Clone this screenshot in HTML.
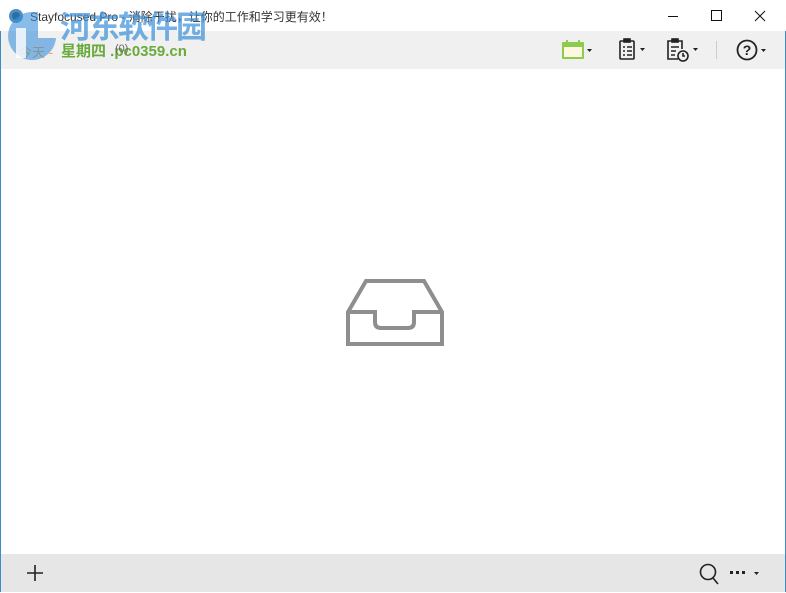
<!DOCTYPE html>
<html><head><meta charset="utf-8"><style>
body{margin:0;width:786px;height:593px;overflow:hidden;background:#fff;font-family:"Liberation Sans","Noto Sans CJK SC",sans-serif;position:relative}
.win{position:absolute;left:0;top:0;width:784px;height:591px;border:1px solid #3c8cc8;border-top:none;}
.title{position:absolute;left:0;top:0;width:786px;height:31px;background:#fff;font-size:12px;color:#000}
.tb{position:absolute;left:1px;top:31px;width:784px;height:38px;background:#f0f0f0}
.bb{position:absolute;left:1px;top:554px;width:784px;height:38px;background:#e6e6e6}
.t{position:absolute;white-space:nowrap}
</style></head><body>
<div class="win"></div>
<div class="title">
<svg class="t" style="left:8px;top:8px" width="16" height="16"><circle cx="8" cy="8" r="7" fill="#4a90c8"/><circle cx="8" cy="8" r="4" fill="#2e6e9e"/></svg>
<span class="t" style="left:30px;top:8px;color:#333">Stayfocused Pro - 消除干扰，让你的工作和学习更有效！</span>
<svg class="t" style="left:668px;top:9px" width="100" height="14" stroke="#111" fill="none" stroke-width="1"><line x1="0" y1="7.5" x2="10" y2="7.5"/><rect x="43.5" y="1.5" width="10" height="10"/><path d="M87 2L97 12M97 2L87 12"/></svg>
</div>
<div class="tb">
<span class="t" style="left:18px;top:11px;font-size:13px;color:#f0a030">今天 - </span>
<span class="t" style="left:60px;top:9px;font-size:15px;font-weight:bold;color:#6aaa3a">星期四 .pc0359.cn</span>
<span class="t" style="left:114px;top:12px;font-size:11px;color:#666">(0)</span>
<svg class="t" style="left:560px;top:8px" width="36" height="22"><rect x="1" y="3" width="22" height="17" fill="#8ccc4c" rx="1"/><rect x="3" y="8" width="18" height="10" fill="#fff8e0"/><rect x="5" y="1" width="2" height="4" fill="#8ccc4c"/><rect x="17" y="1" width="2" height="4" fill="#8ccc4c"/><path d="M26 10h5l-2.5 3z" fill="#222"/></svg>
<svg class="t" style="left:617px;top:7px" width="30" height="24" fill="none" stroke="#222" stroke-width="1.6"><rect x="2" y="3" width="14" height="18" rx="1"/><rect x="6" y="1" width="6" height="3" fill="#222"/><path d="M5 9h2M9 9h5M5 13h2M9 13h5M5 17h2M9 17h5"/><path d="M22 10h5l-2.5 3z" fill="#222" stroke="none"/></svg>
<svg class="t" style="left:665px;top:7px" width="36" height="26" fill="none" stroke="#222" stroke-width="1.6"><path d="M12 21H2V3h14v8"/><rect x="6" y="1" width="6" height="3" fill="#222"/><path d="M5 9h8M5 13h5M5 17h4"/><circle cx="17" cy="18" r="5" fill="#f0f0f0"/><path d="M17 15v3h2"/><path d="M27 10h5l-2.5 3z" fill="#222" stroke="none"/></svg>
<div class="t" style="left:715px;top:10px;width:1px;height:18px;background:#ccc"></div>
<svg class="t" style="left:735px;top:7px" width="34" height="24"><circle cx="11" cy="12" r="9.5" fill="none" stroke="#222" stroke-width="1.8"/><text x="11" y="17" font-size="14" font-weight="bold" text-anchor="middle" fill="#222" font-family="Liberation Sans">?</text><path d="M25 11h5l-2.5 3z" fill="#222"/></svg>
</div>
<svg class="t" style="left:340px;top:275px" width="110" height="75" fill="none" stroke="#8e8e8e" stroke-width="4"><path d="M26 6H84L102 37V69H8V37Z"/><path d="M8 37H35V47Q35 53 41 53H68Q74 53 74 47V37H102"/></svg>
<div class="bb">
<svg class="t" style="left:25px;top:10px" width="18" height="18" stroke="#222" stroke-width="1.6"><path d="M9 1v16M1 9h16"/></svg>
<svg class="t" style="left:697px;top:8px" width="24" height="24" fill="none" stroke="#222" stroke-width="1.6"><circle cx="10" cy="10" r="7.5"/><path d="M15 16l5 6"/></svg>
<svg class="t" style="left:729px;top:14px" width="36" height="10" fill="#222"><rect x="0" y="3" width="3" height="3"/><rect x="6" y="3" width="3" height="3"/><rect x="12" y="3" width="3" height="3"/><path d="M24 4h5l-2.5 3z"/></svg>
</div>
<svg class="t" style="left:2px;top:8px" width="56" height="56"><path d="M30 4a24 24 0 1 0 24 26h-18v-26z" fill="#3a8fd8" opacity=".6"/><path d="M14 20h10v30h-10z" fill="#fff" opacity=".8"/></svg>
<div class="t" style="left:60px;top:5px;font-size:31px;line-height:40px;font-weight:bold;color:#3a8fd8;opacity:.7;font-family:'Noto Sans CJK SC',sans-serif;letter-spacing:-2px">河东软件园</div>
</body></html>
